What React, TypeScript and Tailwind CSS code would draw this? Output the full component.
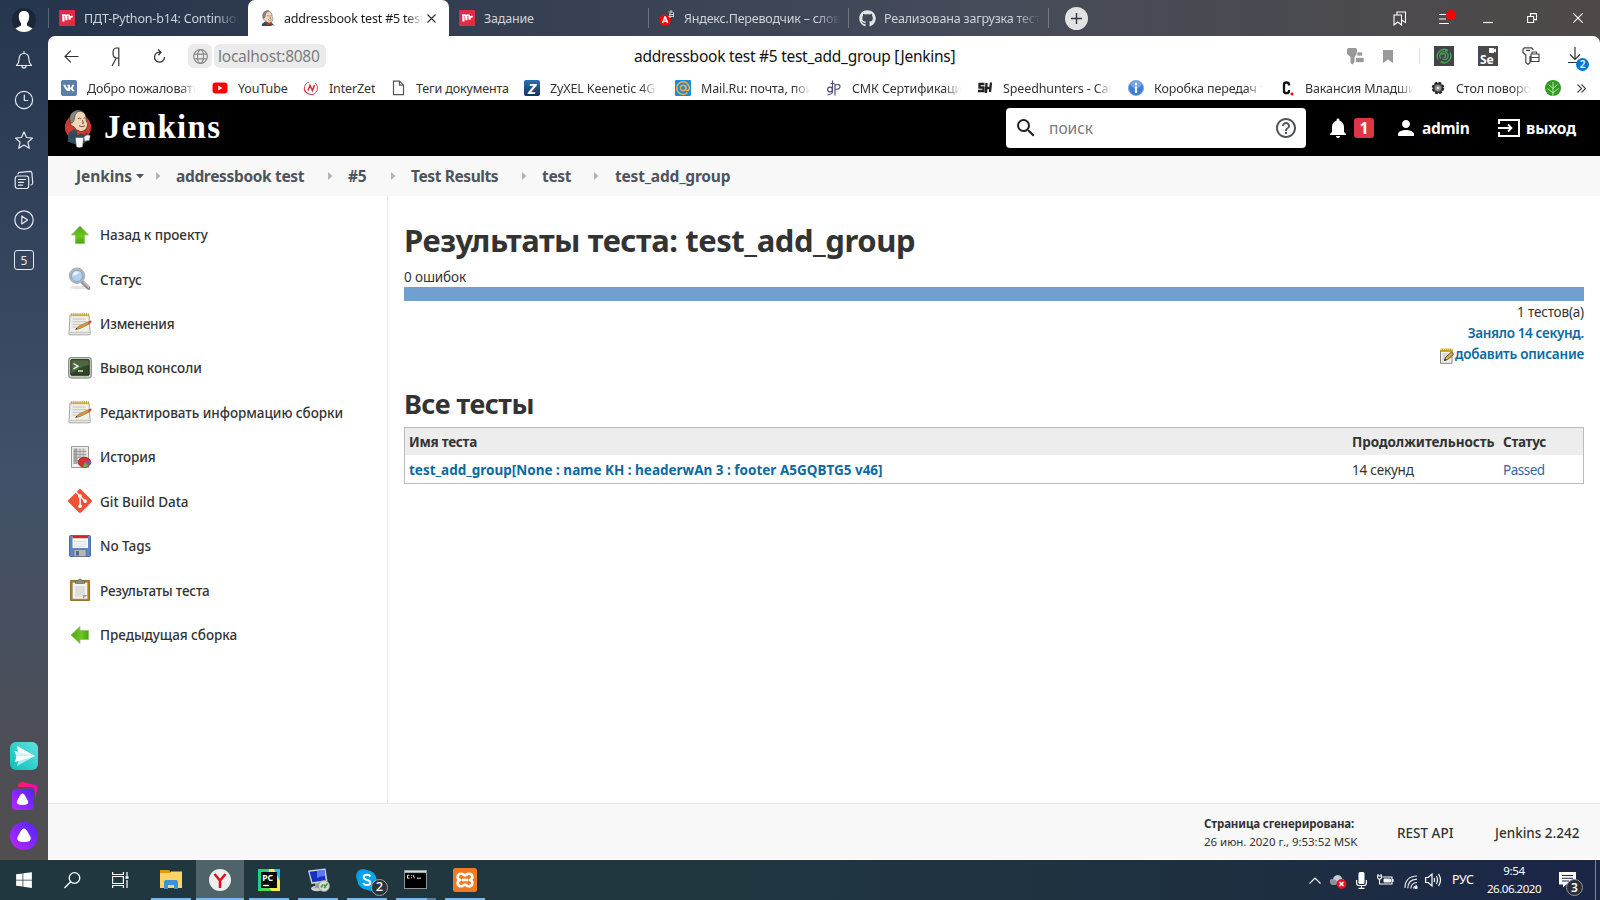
import type { ReactNode } from "react";
import { FaGithub, FaVk, FaWindows } from "react-icons/fa";
import { MdNotifications, MdPerson, MdSearch, MdHelpOutline } from "react-icons/md";

/* ---------- browser chrome icons ---------- */

function MIcon() {
  return (
    <svg width="16" height="16" viewBox="0 0 16 16" className="shrink-0">
      <rect width="16" height="16" rx="1" fill="#e42b45" />
      <path d="M3 5.200h2.500q1.700 0 1.700 1.700v1M7.200 8V7q0-1.800 1.700-1.800T10.600 7v.5M10.600 6.500q1 1 3-.3" fill="none" stroke="#fff" strokeWidth="1.800" />
      <path d="M4.400 5v6.500M7.400 6.500v3.700M10.600 6.500v3.200" stroke="#fff" strokeWidth="2.200" />
    </svg>
  );
}

function Butler({ className, viewBox, logo }: { className: string; viewBox: string; logo?: boolean }) {
  return (
    <svg className={className} viewBox={viewBox}>
      {logo && <circle cx="14" cy="18.500" r="13.200" fill="#d33833" />}
      <path d="M3.500 33l1-9 5.500-4 8 1 6.500 4-.5 7-4 3-8 1z" fill="#335061" />
      <path d="M5 27q3-4 7-3l3 3 4-3 4 4-3 6-9-1z" fill="#2b4a5c" />
      <path d="M7 8q1-6 8-6 6 0 7 6l.5 5q2 1 1 4-1 5-6.500 6-5-.5-7-5-4-1-4-4z" fill="#f0d6b7" stroke="#3a2f28" strokeWidth=".7" />
      <path d="M6.500 14Q4 6 9 3q4-3 8-1.500-5 1-6 5l-1 5-2 3z" fill="#8d8680" stroke="#3a3a3a" strokeWidth=".6" />
      <path d="M14 10q1.500-1.500 3 0M19.500 9.500q1-1 2 0M15 17q3 2 6 0M18.500 11l1 3.500h-1.500" fill="none" stroke="#5a4032" strokeWidth=".9" />
      <path d="M12.500 21l4.500 2 5-1.500v5l-4.500-1.500-4.500 2z" fill="#d33833" stroke="#7d1a17" strokeWidth=".4" />
      <path d="M11.500 29h8l-1 9.500q-3 1-6 0z" fill="#fff" stroke="#777" strokeWidth=".4" />
      <path d="M20 28q4-3 6.500-1l-1 5-5 .5z" fill="#f3f3f3" stroke="#555" strokeWidth=".5" />
    </svg>
  );
}

function Avatar() {
  return (
    <svg width="24" height="24" viewBox="0 0 24 24">
      <circle cx="12" cy="12" r="12" fill="#1c2636" />
      <path d="M12 3c3.800 0 5.400 2.600 5.200 6-.2 2.800-1 4.700-2.200 6v2.500c1.500 1.300 4 1.800 5.500 2.900A12 12 0 0 1 12 24a12 12 0 0 1-8.500-3.600C5 19.300 7.500 18.800 9 17.500V15c-1.200-1.300-2-3.200-2.200-6C6.600 5.600 8.200 3 12 3z" fill="#fff" />
    </svg>
  );
}

function RailIcon({ children }: { children: ReactNode }) {
  return (
    <svg width="20" height="20" viewBox="0 0 20 20" fill="none" stroke="#e6eaf0" strokeWidth="1.200" strokeLinejoin="round" strokeLinecap="round">
      {children}
    </svg>
  );
}

function Rail() {
  return (
    <aside className="flex w-12 shrink-0 flex-col items-center bg-linear-to-b from-[#26364f] from-0% via-[#41516a] via-55% to-[#504e4f] to-98% pt-2">
      <Avatar />
      <div className="mt-[18px] flex flex-col gap-5">
        <RailIcon>
          <path d="M2.500 15.500h15c-2-1.800-2.500-3.500-2.600-6.500C14.800 5.600 13 3.500 10 3.500S5.200 5.600 5.100 9c-.1 3-.6 4.700-2.600 6.500zM10 3.500V1.300M8 15.800c0 3 4 3 4 0" />
        </RailIcon>
        <RailIcon>
          <circle cx="10" cy="10" r="8.600" />
          <path d="M10.300 5v5.500h3.400" />
        </RailIcon>
        <RailIcon>
          <path d="M10 1.800l2.500 5.700 6 .6-4.600 4.100 1.400 6.100-5.300-3.200-5.300 3.200 1.400-6.100L1.500 8.100l6-.6z" />
        </RailIcon>
        <RailIcon>
          <rect x="1.200" y="6" width="13.500" height="12.500" rx="2.500" />
          <path d="M4 3.800q.3-1.400 1.800-1.500l10.200-.9q1.700 0 1.900 1.600l.8 10q0 1.500-1.700 2M4.500 9.500h7M4.500 12.300h5M4.500 15.100h4" />
        </RailIcon>
        <RailIcon>
          <circle cx="10" cy="10" r="9.200" />
          <path d="M7.800 6v8l5.800-4z" />
        </RailIcon>
        <div className="flex h-5 w-5 items-center justify-center rounded-[3px] border border-[#e6eaf0] pt-px text-xs text-[#e6eaf0]">5</div>
      </div>
      <div className="mt-auto flex flex-col gap-3 pb-[10px]">
        <svg width="28" height="28" viewBox="0 0 28 28">
          <defs>
            <linearGradient id="tq" x1="1" y1="0" x2="0" y2="1">
              <stop offset="0" stopColor="#5fe3e0" />
              <stop offset="1" stopColor="#0fbcbb" />
            </linearGradient>
          </defs>
          <rect width="28" height="28" rx="6" fill="url(#tq)" />
          <path d="M7 4l18 10L7 24l2-7z" fill="#a8efee" />
          <path d="M7 4l18 10-16-2.500zM4.500 9L25 14 5 20l1.500-6z" fill="#fff" />
          <path d="M4.500 9L25 14H6.500z" fill="#c8f6f6" />
        </svg>
        <svg width="28" height="28" viewBox="0 0 28 28">
          <defs>
            <linearGradient id="pk" x1="0" y1="0" x2="1" y2="0">
              <stop offset="0" stopColor="#ff1f5a" />
              <stop offset="1" stopColor="#ff00c8" />
            </linearGradient>
            <linearGradient id="al" x1="1" y1="0" x2="0" y2="1">
              <stop offset="0" stopColor="#4a26ff" />
              <stop offset="1" stopColor="#c026ff" />
            </linearGradient>
          </defs>
          <path d="M8 5q0-5 5-5l12 3q3 1 2.500 4l-2 9-1-8q-.5-3-3-3z" fill="url(#pk)" />
          <rect x="2" y="7" width="21.500" height="21" rx="4" fill="url(#al)" />
          <path d="M12.500 11.500q1.500 0 2.500 2l3 5.500q1.500 4-5.500 4t-5.500-4l3-5.500q1-2 2.500-2z" fill="#fff" />
        </svg>
        <svg width="28" height="28" viewBox="0 0 28 28">
          <circle cx="14" cy="14" r="14" fill="url(#al)" />
          <path d="M14 6.500q1.700 0 3 2.300l3.500 6.200q2 5-6.500 5t-6.500-5L11 8.800q1.300-2.300 3-2.300z" fill="#fff" />
        </svg>
      </div>
    </aside>
  );
}

function TabText({ className, children }: { className: string; children: ReactNode }) {
  return <span className={`overflow-hidden whitespace-nowrap pt-0.5 text-[12.500px] tracking-[-0.190px] ${className}`}>{children}</span>;
}

function TabStrip() {
  return (
    <div className="flex h-9 items-center">
      <div className="h-5 w-px bg-white/25" />
      <div className="flex w-[199px] items-center pl-[10px]">
        <MIcon />
        <TabText className="ml-[9px] w-[155px] mask-r-from-85% text-[#ced3da]">ПДТ-Python-b14: Continuous</TabText>
      </div>
      <div className="relative flex h-full w-[201px] items-center rounded-t-[7px] bg-white pl-3">
        <Butler className="h-4 w-4 shrink-0" viewBox="2 0 26 28" />
        <TabText className="ml-2 w-[139px] mask-r-from-88% text-[#1a1a1a]">addressbook test #5 test_add</TabText>
        <svg width="9" height="9" viewBox="0 0 9 9" className="ml-1 shrink-0" stroke="#333" strokeWidth="1.100">
          <path d="M.5.5l8 8M8.500.5l-8 8" />
        </svg>
      </div>
      <div className="flex w-[199px] items-center pl-[10px]">
        <MIcon />
        <TabText className="ml-[9px] text-[#ced3da]">Задание</TabText>
      </div>
      <div className="h-5 w-px bg-white/25" />
      <div className="flex w-[199px] items-center pl-[10px]">
        <svg width="16" height="16" viewBox="0 0 16 16" className="shrink-0">
          <circle cx="6" cy="10.200" r="5.800" fill="#f00" />
          <path d="M3.500 13l2.400-6h.4l2.400 6M4.300 11.200h3.600" fill="none" stroke="#fff" strokeWidth="1.500" />
          <path d="M9.500 2h5M12 0v3M10 4.500h5M11 3v5M14.500 2.500v4.500M9.500 6.500h5" stroke="#d8d8d8" strokeWidth=".9" />
        </svg>
        <TabText className="ml-[9px] w-[156px] mask-r-from-85% text-[#ced3da]">Яндекс.Переводчик – слово</TabText>
      </div>
      <div className="h-5 w-px bg-white/25" />
      <div className="flex w-[199px] items-center pl-[10px]">
        <FaGithub className="h-[17px] w-[17px] shrink-0 text-[#e2e4e6]" />
        <TabText className="ml-[8px] w-[156px] mask-r-from-85% text-[#ced3da]">Реализована загрузка тестов</TabText>
      </div>
      <div className="h-5 w-px bg-white/25" />
      <svg width="23" height="23" viewBox="0 0 23 23" className="ml-[16px]">
        <circle cx="11.500" cy="11.500" r="11.500" fill="#e1e2e4" />
        <path d="M11.500 6v11M6 11.500h11" stroke="#34373c" strokeWidth="1.400" />
      </svg>
      <div className="ml-auto flex items-center pr-[17px] text-white">
        <svg width="14" height="15" viewBox="0 0 14 15" fill="none" stroke="#fff" strokeWidth="1.100">
          <path d="M1 4h7.500v10l-3.700-3L1 14zM4 4V1h8.500v10.500L8.500 9" />
        </svg>
        <svg width="20" height="16" viewBox="0 0 20 16" className="ml-[32px]">
          <path d="M0 4.500h9M0 9h7M0 13.500h10" stroke="#fff" strokeWidth="1.200" />
          <circle cx="12" cy="5" r="5" fill="#f00" />
        </svg>
        <svg width="10" height="12" viewBox="0 0 10 12" className="ml-[24px]">
          <path d="M0 10.500h10" stroke="#fff" strokeWidth="1.200" />
        </svg>
        <svg width="10" height="10" viewBox="0 0 10 10" className="ml-[34px]" fill="none" stroke="#fff" strokeWidth="1.100">
          <path d="M.6 3.500h6v6h-6zM3.500 3.500V.6h6v6h-3" />
        </svg>
        <svg width="10" height="10" viewBox="0 0 10 10" className="ml-[36px]" stroke="#fff" strokeWidth="1.100">
          <path d="M0 0l10 10M10 0L0 10" />
        </svg>
      </div>
    </div>
  );
}

function AddressBar() {
  return (
    <div className="flex h-10 items-center pl-4 pr-[17px]">
      <svg width="15" height="13" viewBox="0 0 15 13" fill="none" stroke="#333" strokeWidth="1.200">
        <path d="M14.500 6.500H1M6.800.6L1 6.500l5.800 5.900" />
      </svg>
      <svg width="9" height="19" viewBox="0 0 9 19" className="ml-[32px]" fill="none" stroke="#333" strokeWidth="1.200">
        <path d="M7.800 19V1H5.500Q2 1 2 6t3.500 5h2.300M5.300 11L1 19" />
      </svg>
      <svg width="13" height="15" viewBox="0 0 13 15" className="ml-[33px]" fill="none" stroke="#333" strokeWidth="1.300">
        <path d="M7.500 3.200A5 5 0 1 0 11.500 8M5 .6l3 2.600-2.600 3" />
      </svg>
      <div className="ml-[22px] flex h-6 w-6 items-center justify-center rounded-[6px] bg-[#ebebeb]">
        <svg width="15" height="15" viewBox="0 0 15 15" fill="none" stroke="#888" strokeWidth="1.200">
          <circle cx="7.500" cy="7.500" r="6.800" />
          <ellipse cx="7.500" cy="7.500" rx="3" ry="6.800" />
          <path d="M1 5.200h13M1 9.800h13" />
        </svg>
      </div>
      <div className="ml-[2px] flex h-6 w-28 items-center rounded-[6px] bg-[#ebebeb] pl-1 pt-0.5 text-[15.500px] tracking-[-0.250px] text-[#7c7c7c]">localhost:8080</div>
      <div className="ml-[308px] whitespace-nowrap pt-0.5 text-[15.500px] tracking-[-0.260px] text-[#111]">addressbook test #5 test_add_group [Jenkins]</div>
      <div className="ml-auto flex items-center">
        <svg width="17" height="17" viewBox="0 0 17 17" className="text-[#999]" fill="currentColor">
          <path d="M0 1.500Q0 0 1.500 0h7Q10 0 10 1.500V6L7.500 9v5L5.500 16.500 3.500 15V9L0 6z" />
          <path d="M10 4h5.500v4H10zM8.500 9.500H17v5H8.500z" stroke="#fff" strokeWidth=".7" />
        </svg>
        <svg width="10" height="13" viewBox="0 0 10 13" className="ml-[19px]">
          <path d="M0 0h10v13L5 9.500 0 13z" fill="#999" />
        </svg>
        <div className="ml-[26px] h-4 w-px bg-[#ddd]" />
        <svg width="20" height="20" viewBox="0 0 20 20" className="ml-[14px]">
          <rect width="20" height="20" fill="#414348" />
          <path d="M4 13.500a7 7 0 0 1 10-9M16 6.500a7 7 0 0 1-9.500 9.500M14 4.500h-3M6.500 16h3M7 12.500a4 4 0 1 1 6 0q-2 2-4.500.5M7.500 8.500q3-2 4 .5t-2 2.500" fill="none" stroke="#45a35a" strokeWidth="1.300" />
        </svg>
        <div className="ml-6 flex h-5 w-5 flex-col justify-between overflow-hidden bg-[#4a4a4c] text-white">
          <svg width="7" height="5" viewBox="0 0 7 5" className="ml-[11px] mt-[2px] shrink-0 self-start">
            <path d="M0 0h5v1.500L7 .5v4L5 3.500V5H0z" fill="#fff" />
          </svg>
          <span className="ml-[2px] text-[12px] font-bold leading-[12px]">Se</span>
        </div>
        <svg width="18" height="18" viewBox="0 0 18 18" className="ml-[24px]" fill="none" stroke="#444" strokeWidth="1.200" strokeLinejoin="round">
          <path d="M8 9v6.800L6 17.400 3.800 15.500V8L1 5.500V2.200L2.500.8h7L11 2.200V3M4 3.300h4M9 7h8v7.500H9zM9 10.500h8M10 7V5h4.500v2" />
        </svg>
        <div className="relative ml-[28px] h-[18px] w-[15px]">
          <svg width="14" height="17" viewBox="0 0 14 17" fill="none" stroke="#333" strokeWidth="1.200">
            <path d="M7 0v12M2 7.500l5 5 5-5M0 15.500h9" />
          </svg>
          <div className="absolute -bottom-[6px] -right-[6px] flex h-[13px] w-[13px] items-center justify-center rounded-full bg-[#0078d7] text-[10px] font-semibold text-white">2</div>
        </div>
      </div>
    </div>
  );
}

function BookIcon({ kind }: { kind: string }) {
  switch (kind) {
    case "vk":
      return (
        <span className="flex h-4 w-4 items-center justify-center rounded-[2px] bg-[#5b7fa6]">
          <FaVk className="h-3 w-3 text-white" />
        </span>
      );
    case "yt":
      return (
        <svg width="16" height="16" viewBox="0 0 16 16">
          <rect x=".5" y="2.500" width="15" height="11" rx="3" fill="#f00" />
          <path d="M6.300 5.500v5l4.200-2.500z" fill="#fff" />
        </svg>
      );
    case "iz":
      return (
        <svg width="16" height="16" viewBox="0 0 16 16" fill="none" stroke="#cf3340">
          <path d="M6 2A6.500 6.500 0 0 0 3 12.500M8 14.700A6.800 6.800 0 0 0 12.500 3" strokeWidth=".9" />
          <path d="M1 9.500q3 5 7.500 5" strokeWidth="1.200" />
          <path d="M5 10.500l2-5 2.500 5 2-5.500" strokeWidth="1.600" />
        </svg>
      );
    case "doc":
      return (
        <svg width="16" height="16" viewBox="0 0 16 16" fill="none" stroke="#555" strokeWidth="1.200">
          <path d="M3.500 1.200h6l4 4v9.500h-10zM9.500 1.200v4h4" />
        </svg>
      );
    case "zy":
      return <span className="flex h-4 w-4 items-center justify-center rounded-[2px] bg-linear-to-b from-[#2c6fb8] to-[#12335f] text-[15px] font-bold italic leading-none text-white">Z</span>;
    case "mail":
      return (
        <svg width="16" height="16" viewBox="0 0 16 16">
          <rect width="16" height="16" rx="1" fill="#168de2" />
          <path d="M12.500 12.500a6.300 6.300 0 1 1 1.800-4.500c0 3.200-3.600 3.200-3.600.4V5.500" fill="none" stroke="#ffa930" strokeWidth="1.500" />
          <circle cx="8" cy="8" r="2.700" fill="none" stroke="#ffa930" strokeWidth="1.500" />
        </svg>
      );
    case "smk":
      return (
        <svg width="16" height="16" viewBox="0 0 16 16" fill="none" stroke="#4c4f78" strokeWidth="1.200">
          <circle cx="4" cy="9.500" r="2.400" />
          <path d="M6.500 .5v12M9 4v11.500M1.500 15q3.500-.5 5-2.500M4.500 3.500h4" />
          <path d="M9 5q5-1.500 5 1.500T9 9.500" />
        </svg>
      );
    case "sh":
      return (
        <svg width="16" height="16" viewBox="0 0 16 16" fill="none" stroke="#222" strokeWidth="2.300">
          <path d="M7.500 4H2.500v3.500h4V11H1M9.500 3L9 13M14 2.500L13 12M8 8h6" />
        </svg>
      );
    case "info":
      return (
        <svg width="16" height="16" viewBox="0 0 16 16">
          <circle cx="8" cy="8" r="7.600" fill="#3f7fcf" stroke="#7ea6d8" strokeWidth=".8" />
          <ellipse cx="8" cy="4.600" rx="5.500" ry="3.500" fill="#8db8ea" opacity=".7" />
          <path d="M8 2.800v2.400M8 6.500V13" stroke="#fff" strokeWidth="2.200" />
        </svg>
      );
    case "c":
      return (
        <svg width="16" height="16" viewBox="0 0 16 16">
          <path d="M10 5.500V4.500Q10 2.500 7.500 2.500T5 4.500v6.500q0 2.200 2.500 2.200t2.500-2.200V10" fill="none" stroke="#111" strokeWidth="2.300" />
          <circle cx="13" cy="14" r="1.400" fill="#f00" />
        </svg>
      );
    case "gear":
      return (
        <svg width="16" height="16" viewBox="0 0 16 16">
          <circle cx="8" cy="8" r="5.200" fill="#444" />
          <circle cx="8" cy="8" r="5.300" fill="none" stroke="#1c1c1c" strokeWidth="1.800" strokeDasharray="2.760 1.400" />
          <circle cx="8" cy="8" r="3.300" fill="#8c8c8c" />
          <circle cx="8" cy="8" r="1.200" fill="#eee" />
        </svg>
      );
    default:
      return (
        <svg width="16" height="16" viewBox="0 0 16 16">
          <circle cx="8" cy="8" r="8" fill="#2f9a1f" />
          <path d="M8 16V2M8 13l5.500-4.500M8 13L2.500 8.500M8 8.500l4.500-4M8 8.500l-4.500-4" stroke="#c9efb4" strokeWidth=".9" />
        </svg>
      );
  }
}

const bookmarks = [
  { icon: "vk", label: "Добро пожаловать", cell: "w-[151px]", text: "ml-[10px] w-[109px] mask-r-from-85%" },
  { icon: "yt", label: "YouTube", cell: "w-[91px]", text: "ml-[10px]" },
  { icon: "iz", label: "InterZet", cell: "w-[87px]", text: "ml-[10px]" },
  { icon: "doc", label: "Теги документа", cell: "w-[134px]", text: "ml-[10px]" },
  { icon: "zy", label: "ZyXEL Keenetic 4G", cell: "w-[151px]", text: "ml-[10px] w-[107px] mask-r-from-85%" },
  { icon: "mail", label: "Mail.Ru: почта, поиск", cell: "w-[151px]", text: "ml-[10px] w-[109px] mask-r-from-85%" },
  { icon: "smk", label: "СМК Сертификация", cell: "w-[151px]", text: "ml-[10px] w-[109px] mask-r-from-85%" },
  { icon: "sh", label: "Speedhunters - Car", cell: "w-[151px]", text: "ml-[10px] w-[109px] mask-r-from-85%" },
  { icon: "info", label: "Коробка передач т", cell: "w-[151px]", text: "ml-[10px] w-[109px] mask-r-from-85%" },
  { icon: "c", label: "Вакансия Младший", cell: "w-[151px]", text: "ml-[10px] w-[109px] mask-r-from-85%" },
  { icon: "gear", label: "Стол поворотный", cell: "w-[115px]", text: "ml-[10px] w-[75px] mask-r-from-75%" },
];

function Bookmarks() {
  return (
    <div className="flex h-6 items-center pl-[13px] text-[12.500px] tracking-[-0.130px] text-[#333]">
      {bookmarks.map((b) => (
        <div key={b.icon} className={`flex shrink-0 items-center ${b.cell}`}>
          <span className="shrink-0">
            <BookIcon kind={b.icon} />
          </span>
          <span className={`overflow-hidden whitespace-nowrap pt-px leading-[23px] ${b.text}`}>{b.label}</span>
        </div>
      ))}
      <BookIcon kind="leaf" />
      <svg width="9" height="9" viewBox="0 0 9 9" className="ml-4" fill="none" stroke="#444" strokeWidth="1.100">
        <path d="M.5.5l4 4-4 4M4.500.5l4 4-4 4" />
      </svg>
    </div>
  );
}

/* ---------- Jenkins page ---------- */

function JenkinsHeader() {
  return (
    <header className="flex h-14 items-center bg-black pl-4 text-base font-bold text-white">
      <Butler className="h-[39px] w-7" viewBox="0 0 28 39.500" logo />
      <span className="ml-[12px] w-[120px] pb-0.5 font-['Liberation_Serif',serif] text-[33px] leading-none tracking-[1.300px]">Jenkins</span>
      <div className="ml-auto flex h-10 w-[300px] items-center rounded bg-white pl-2 pr-2">
        <MdSearch className="h-6 w-6 text-[#222]" />
        <span className="ml-[11px] pt-0.5 text-[15.500px] font-normal text-[#7a7a7a]">поиск</span>
        <MdHelpOutline className="ml-auto h-6 w-6 text-[#4d545d]" />
      </div>
      <MdNotifications className="ml-[20px] h-6 w-6" />
      <span className="ml-1 flex h-5 w-5 items-center justify-center rounded-[3px] bg-[#dc3545]">1</span>
      <MdPerson className="ml-[20px] h-6 w-6" />
      <span className="ml-1 w-12 pt-0.5 text-[15.500px] tracking-[-0.290px]">admin</span>
      <svg width="22" height="18" viewBox="0 0 22 18" className="ml-[28px]" fill="none" stroke="#fff" strokeWidth="2">
        <path d="M1 5V1h20v16H1v-4" />
        <path d="M0 9h13M10 5.500L13.500 9 10 12.500" strokeWidth="1.800" />
      </svg>
      <span className="ml-[6px] w-[74px] pt-0.5 text-[15.500px] tracking-[-0.100px]">выход</span>
    </header>
  );
}

function Sep({ className }: { className: string }) {
  return (
    <svg width="5" height="8" viewBox="0 0 5 8" className={className}>
      <path d="M0 0l4.500 4L0 8z" fill="#b5b5b5" />
    </svg>
  );
}

function Breadcrumbs() {
  return (
    <nav className="flex h-10 items-center bg-[#f8f8f8] pl-7 text-[15.500px] font-bold text-[#4d545d]">
      <span className="w-[57px] pt-0.5 tracking-[-0.080px]">Jenkins</span>
      <svg width="8" height="5" viewBox="0 0 8 5" className="ml-[3px]">
        <path d="M0 0h8L4 4.500z" fill="#4d545d" />
      </svg>
      <Sep className="ml-[12px]" />
      <span className="ml-[15px] w-[129px] whitespace-nowrap pt-0.5 tracking-[-0.340px]">addressbook test</span>
      <Sep className="ml-[23px]" />
      <span className="ml-[15px] w-[19px] pt-0.5 tracking-[-0.300px]">#5</span>
      <Sep className="ml-[24px]" />
      <span className="ml-[15px] w-[88px] whitespace-nowrap pt-0.5 tracking-[-0.400px]">Test Results</span>
      <Sep className="ml-[23px]" />
      <span className="ml-[15px] w-[29px] pt-0.5 tracking-[-0.350px]">test</span>
      <Sep className="ml-[23px]" />
      <span className="ml-[16px] pt-0.5 tracking-[-0.200px]">test_add_group</span>
    </nav>
  );
}

function Notepad({ className }: { className: string }) {
  return (
    <svg className={className} viewBox="0 0 24 24">
      <path d="M2 3h19l1.200 19q0 .8-1 .8H1.800q-1 0-.8-.9z" fill="#efefec" stroke="#a5a5a0" strokeWidth="1" />
      <path d="M1.400 20.500h20.700" stroke="#c8c8c4" strokeWidth="1.500" />
      <path d="M3 2.800h18" stroke="#c9a92c" strokeWidth="3" strokeDasharray="1.400 .7" />
      <path d="M4.500 7h13M4.500 9.700h14M4.500 12.400h9M4.500 15h6" stroke="#c2c2bf" strokeWidth="1" />
      <path d="M8 17.500l3-3.500 9.500-4.300 1 2.200L12 16.500z" fill="#dc9b3c" stroke="#8a5a14" strokeWidth=".6" />
      <path d="M20 9.900l2.500-1.400q1.500 0 1 1.700L21.200 12z" fill="#e04a32" />
      <path d="M7 18l2.400-1.500-.9-.8z" fill="#333" />
    </svg>
  );
}

function SmallNotepad() {
  return (
    <svg width="16" height="16" viewBox="0 0 16 16" className="mt-1">
      <path d="M1.500 2.500h11.500v12.800H1.500z" fill="#f0f0ee" stroke="#85857f" />
      <path d="M1.500 2.300h12" stroke="#c79f1c" strokeWidth="3.200" />
      <path d="M2 1.200h11.500" stroke="#f0d45c" strokeWidth="1.400" strokeDasharray="1.200 .8" />
      <path d="M3.500 6h6M3.500 8h5M3.500 10h3M3.500 12h3" stroke="#b8b8b4" strokeWidth=".9" />
      <path d="M5.500 12.500l1-3 6-5.500 2.200 2.200-6 5.300z" fill="#d8b24c" stroke="#4d3a10" strokeWidth=".9" />
      <path d="M5.300 12.800l2-.8-1.400-1.300z" fill="#222" />
    </svg>
  );
}

function GreenArrow({ className }: { className: string }) {
  return (
    <svg width="24" height="24" viewBox="0 0 24 24" className={className}>
      <defs>
        <linearGradient id="ga" x1="0" y1="0" x2="0" y2="1">
          <stop offset="0" stopColor="#4fa51b" />
          <stop offset=".6" stopColor="#6cc81f" />
          <stop offset="1" stopColor="#48a30c" />
        </linearGradient>
      </defs>
      <path d="M12 3l8.500 9h-4v8.500h-9V12h-4z" fill="url(#ga)" stroke="#8fbf6f" strokeWidth=".8" />
    </svg>
  );
}

function TaskIcon({ kind }: { kind: string }) {
  switch (kind) {
    case "up":
      return <GreenArrow className="" />;
    case "prev":
      return <GreenArrow className="-rotate-90" />;
    case "search":
      return (
        <svg width="24" height="24" viewBox="0 0 24 24">
          <ellipse cx="11" cy="20.500" rx="9" ry="1.800" fill="#e4e4e4" />
          <path d="M14.500 15l6 6" stroke="#8b8b8b" strokeWidth="3.800" strokeLinecap="round" />
          <path d="M15 14.500l6 6" stroke="#c9c9c9" strokeWidth="1.300" />
          <circle cx="9" cy="8.800" r="7.200" fill="#c6dcf4" stroke="#b2b2b2" strokeWidth="2" />
          <circle cx="9" cy="8.800" r="5.700" fill="#b4d0f0" stroke="#6c93c8" strokeWidth=".8" />
          <path d="M4.500 8.500a4.500 4.500 0 0 1 7-3.500q-2 3.500-7 3.500z" fill="#e6f1fc" />
        </svg>
      );
    case "term":
      return (
        <svg width="24" height="24" viewBox="0 0 24 24">
          <rect x=".6" y="1.600" width="22.800" height="20.500" rx="2.500" fill="#c8c9c5" stroke="#858782" />
          <rect x="2.800" y="3.700" width="18.400" height="15.500" rx=".8" fill="#2e4724" stroke="#222a1d" />
          <path d="M3.300 4.200h17.400v5Q14 10 9 14l-5.700 3z" fill="#4c693f" />
          <path d="M5.500 7.500l4.500 2.700-4.500 2.700" fill="none" stroke="#eef3ea" strokeWidth="1.400" />
          <path d="M10 15h5" stroke="#eef3ea" strokeWidth="1.400" />
          <circle cx="17" cy="20.700" r=".6" fill="#7bc943" />
        </svg>
      );
    case "hist":
      return (
        <svg width="24" height="24" viewBox="0 0 24 24">
          <path d="M3.500 1.500h17v21h-17z" fill="#f1f1f0" stroke="#9a9a98" />
          <path d="M5.500 3.500h13V19h-13z" fill="#d5d5d3" />
          <path d="M5.500 3.500h3.300V19H5.500z" fill="#a9a9a7" />
          <path d="M5.500 6.500h13M5.500 9.500h13M5.500 12.500h13M5.500 15.500h13M8.800 3.500V19M12 3.500V19M15.300 3.500V19" stroke="#8f8f8d" strokeWidth=".7" />
          <ellipse cx="16.500" cy="17.300" rx="6.300" ry="5" fill="#dc2f33" stroke="#96191c" strokeWidth=".7" />
          <path d="M16.800 17l5.800-1.300q.5 3.300-2.300 5z" fill="#4b72b5" />
          <path d="M16.800 17l3.500 3.900q-2.600 1.600-5.200.9z" fill="#6ab92f" />
        </svg>
      );
    case "git":
      return (
        <svg width="24" height="24" viewBox="0 0 24 24">
          <path d="M23.546 10.930L13.067.452c-.604-.603-1.582-.603-2.188 0L8.708 2.627l2.760 2.760c.645-.215 1.379-.070 1.889.441.516.515.658 1.258.438 1.900l2.658 2.660c.645-.223 1.387-.078 1.900.435.721.720.721 1.884 0 2.604-.719.719-1.881.719-2.600 0-.539-.541-.674-1.337-.404-1.996L12.860 8.955v6.525c.176.086.342.203.488.348.713.721.713 1.883 0 2.600-.719.721-1.889.721-2.609 0-.719-.719-.719-1.879 0-2.598.182-.180.387-.316.605-.406V8.835c-.217-.091-.424-.222-.600-.401-.545-.545-.676-1.342-.396-2.009L7.636 3.700.450 10.881c-.600.605-.600 1.584 0 2.189l10.480 10.477c.604.604 1.582.604 2.186 0l10.430-10.430c.605-.603.605-1.582 0-2.187" fill="#f05033" />
        </svg>
      );
    case "floppy":
      return (
        <svg width="24" height="24" viewBox="0 0 24 24">
          <path d="M2.500 1.500h19q1 0 1 1v19q0 1-1 1h-19q-1 0-1-1v-19q0-1 1-1z" fill="#5c88c6" stroke="#4a6ca4" />
          <path d="M4.500 2h15.500v12h-15.500z" fill="#f8f8f8" />
          <path d="M4.500 2h15.500v2.200h-15.500z" fill="#d3291c" />
          <path d="M6 7.500h12.500M6 10h12.500M6 12.300h12.500" stroke="#d4d4d4" strokeWidth=".8" />
          <path d="M6 15.500h12v7H6z" fill="#b5b8ba" stroke="#6a6e70" strokeWidth=".7" />
          <path d="M8 17h3v4.500H8z" fill="#4d6796" />
        </svg>
      );
    case "clip":
      return (
        <svg width="24" height="24" viewBox="0 0 24 24">
          <path d="M2.500 2.500h19v20h-19z" fill="#b57b1e" stroke="#875a12" strokeWidth=".8" />
          <path d="M4.500 4.500h15v16.500h-15z" fill="#f3f3f1" stroke="#a09a8c" strokeWidth=".6" />
          <path d="M7 8h10v9l-3 2H7z" fill="#dededc" />
          <path d="M15 20.700V17h4.300z" fill="#9d9d9a" />
          <path d="M7.500 5.500V3h2.500q.2-2 2-2t2 2h2.500v2.500z" fill="#8e8e83" stroke="#66665c" strokeWidth=".7" />
        </svg>
      );
    default:
      return <Notepad className="h-6 w-6" />;
  }
}

const tasks = [
  { icon: "up", label: "Назад к проекту", tr: "tracking-[-0.040px]" },
  { icon: "search", label: "Статус", tr: "tracking-[-0.150px]" },
  { icon: "note", label: "Изменения", tr: "tracking-[-0.200px]" },
  { icon: "term", label: "Вывод консоли", tr: "tracking-[-0.040px]" },
  { icon: "note", label: "Редактировать информацию сборки", tr: "tracking-[-0.040px]" },
  { icon: "hist", label: "История", tr: "tracking-[-0.120px]" },
  { icon: "git", label: "Git Build Data", tr: "tracking-[-0.040px]" },
  { icon: "floppy", label: "No Tags", tr: "tracking-[-0.050px]" },
  { icon: "clip", label: "Результаты теста", tr: "tracking-[-0.200px]" },
  { icon: "prev", label: "Предыдущая сборка", tr: "tracking-[-0.040px]" },
];

function SidePanel() {
  return (
    <aside className="flex w-[340px] shrink-0 flex-col border-r border-[#e8ebeb] pl-5 pt-[16.500px]">
      {tasks.map((t) => (
        <div key={t.label} className="flex h-[44.450px] items-center gap-2">
          <TaskIcon kind={t.icon} />
          <span className={`pt-px text-[13.500px] font-medium text-[#333] ${t.tr}`}>{t.label}</span>
        </div>
      ))}
    </aside>
  );
}

function Results() {
  return (
    <main className="flex flex-1 flex-col pl-4 pr-4 text-[13.500px] text-[#333]">
      <h1 className="mt-[24px] whitespace-nowrap text-[31px] font-bold leading-10 tracking-[-0.450px]">Результаты теста: test_add_group</h1>
      <div className="mt-[7px] h-5 leading-5 tracking-[-0.120px]">0 ошибок</div>
      <div className="h-[14px] bg-[#729fcf]" />
      <div className="mt-px flex flex-col items-end leading-[21px]">
        <span className="tracking-[-0.170px]">1 тестов(а)</span>
        <a className="font-semibold tracking-[-0.350px] text-[#0b6aa2]">Заняло 14 секунд.</a>
        <a className="flex font-semibold tracking-[-0.230px] text-[#0b6aa2]">
          <SmallNotepad />
          добавить описание
        </a>
      </div>
      <h2 className="mt-[21px] text-[27px] font-bold leading-9 tracking-[-0.500px]">Все тесты</h2>
      <div className="mt-[5px] border border-[#bbb]">
        <div className="flex h-[27px] items-center bg-[#ededed] pl-1 pt-0.5 font-bold">
          <span className="w-[943px] tracking-[-0.240px]">Имя теста</span>
          <span className="w-[151px] tracking-[-0.050px]">Продолжительность</span>
          <span className="tracking-[-0.280px]">Статус</span>
        </div>
        <div className="mt-px flex h-[27px] items-center pl-1 pt-0.5">
          <a className="w-[943px] font-bold text-[#0b6aa2]">test_add_group[None : name KH : headerwAn 3 : footer A5GQBTG5 v46]</a>
          <span className="w-[151px] tracking-[-0.200px]">14 секунд</span>
          <span className="tracking-[-0.500px] text-[#3465a4]">Passed</span>
        </div>
      </div>
    </main>
  );
}

function Footer() {
  return (
    <footer className="flex h-[57px] items-center border-b border-t border-b-white border-t-[#e8ebeb] bg-[#f8f8f8] pl-[1156px] pt-[2px] text-[13.500px] font-medium text-[#333]">
      <div className="flex w-[193px] flex-col whitespace-nowrap text-[11.500px] leading-[18px]">
        <span className="font-bold tracking-[-0.130px]">Страница сгенерирована:</span>
        <span className="font-normal tracking-[-0.040px]">26 июн. 2020 г., 9:53:52 MSK</span>
      </div>
      <span className="w-[98px] pt-0.5">REST API</span>
      <span className="pt-0.5">Jenkins 2.242</span>
    </footer>
  );
}

/* ---------- Windows taskbar ---------- */

function TaskButton({ className, underline, children }: { className: string; underline: string; children: ReactNode }) {
  return (
    <div className={`flex h-10 flex-col items-center ${className}`}>
      <div className="flex flex-1 items-center pt-px">{children}</div>
      <div className={`h-[2px] ${underline}`} />
    </div>
  );
}

function Taskbar() {
  return (
    <footer className="flex h-10 shrink-0 items-center bg-linear-to-r from-[#203740] from-45% via-[#1e3040] via-75% to-[#1b2547] text-white">
      <FaWindows className="ml-[15px] h-[18px] w-[18px]" />
      <svg width="17" height="17" viewBox="0 0 17 17" className="ml-[31px]" fill="none" stroke="#fff" strokeWidth="1.300">
        <circle cx="10.500" cy="6" r="5.300" />
        <path d="M6.700 9.800L.5 16" />
      </svg>
      <svg width="17" height="16" viewBox="0 0 17 16" className="ml-[31px]" fill="none" stroke="#fff" strokeWidth="1.200">
        <path d="M.6 4.500h10.800v7H.6zM.6 0v2.500h10.800V0M.6 16v-2.500h10.800V16M15 0v4M15 8v8" />
        <path d="M13.500 5.500h3" strokeWidth="2.500" />
      </svg>
      <TaskButton className="ml-[22px] w-10" underline="w-10 bg-[#76b9ed]">
        <svg width="22" height="20" viewBox="0 0 22 20">
          <path d="M0 0h9l2 3H0z" fill="#e09a10" />
          <path d="M0 3h10l1-1.500h11V18H0z" fill="#ffd364" />
          <path d="M4 19v-7q0-2 2-2h10q2 0 2 2v7h-4v-4H8v4z" fill="#3b92d9" />
        </svg>
      </TaskButton>
      <TaskButton className="ml-[5px] w-12 bg-[#4f636b]" underline="w-12 bg-[#76b9ed]">
        <svg width="22" height="22" viewBox="0 0 22 22">
          <circle cx="11" cy="11" r="11" fill="#eeeeee" />
          <path d="M5.500 5l5.500 6.500L16.500 5M11 11.500V19" fill="none" stroke="#e01018" strokeWidth="2.500" />
        </svg>
      </TaskButton>
      <TaskButton className="ml-[5px] w-10" underline="w-10 bg-[#76b9ed]">
        <svg width="22" height="22" viewBox="0 0 22 22">
          <path d="M0 0h22v22H0z" fill="#1fd08a" />
          <path d="M11 0h11v22H8z" fill="#f3ee4a" />
          <path d="M16 0h6v12z" fill="#19c1e8" />
          <path d="M0 22l8-6 6 6z" fill="#54d84c" />
          <path d="M3 3h16v16H3z" fill="#0a0a0a" />
          <path d="M5 16.500h6" stroke="#fff" strokeWidth="1.400" />
          <text x="4.300" y="11.500" fontSize="8.500" fontWeight="700" fill="#fff" fontFamily="Noto Sans, sans-serif">PC</text>
        </svg>
      </TaskButton>
      <TaskButton className="ml-[9px] w-10" underline="w-10 bg-[#76b9ed]">
        <svg width="23" height="24" viewBox="0 0 23 24">
          <ellipse cx="10" cy="20.500" rx="6" ry="2.800" fill="#c9ccd0" />
          <path d="M8 15h4v5H8z" fill="#9a9da2" />
          <path d="M1 2.500L18.500.5l2 13L4.500 16z" fill="#d6d8dc" />
          <path d="M2.500 3.800L17.300 2l1.500 10.300-13.300 2z" fill="#1730c4" />
          <path d="M10 3l7.300-1 1 6q-5 0-8.300 2z" fill="#5b7bf0" />
          <circle cx="17" cy="18" r="5.500" fill="#d5dcd6" stroke="#8a938c" strokeWidth=".7" />
          <path d="M14 19.500l2-3M17 20l3.500-4.500M17 16.500l2 3" stroke="#3a9a3a" strokeWidth="1.500" />
        </svg>
      </TaskButton>
      <TaskButton className="ml-[9px] w-10" underline="w-10 bg-[#76b9ed]">
        <div className="relative h-[22px] w-[22px]">
          <svg width="22" height="22" viewBox="0 0 22 22">
            <circle cx="7" cy="7" r="7" fill="#0f95e8" />
            <circle cx="15" cy="15" r="7" fill="#0aa0e8" />
            <circle cx="11" cy="11" r="9.700" fill="#08a5ec" />
            <path d="M14.500 7.500Q13.500 5.800 11 5.800q-3.300 0-3.300 2.500 0 2 3.300 2.600t3.300 2.700q0 2.500-3.300 2.500-2.800 0-3.800-2" fill="none" stroke="#fff" strokeWidth="2" />
          </svg>
          <div className="absolute left-[15px] top-[10px] flex h-[17px] w-[17px] items-center justify-center rounded-full border border-[#9aa3a8] bg-[#2b3438] text-[13px] font-medium">2</div>
        </div>
      </TaskButton>
      <TaskButton className="ml-[9px] w-10" underline="w-10 bg-linear-to-r from-[#76b9ed] from-78% to-[#4f7fa3] to-78%">
        <svg width="23" height="19" viewBox="0 0 23 19" className="mr-px">
          <path d="M0 0h23v19H0z" fill="#8f9496" />
          <path d="M1 3h21v15H1z" fill="#000" />
          <path d="M1 .8h21v1.500H1z" fill="#d7d9da" />
          <path d="M5.500 5.200H3.500v3h2M7.500 5.200v.8M7.500 7.400v.8M9 5l1.500 3.300M13 8.200h4" stroke="#e8e8e8" fill="none" />
        </svg>
      </TaskButton>
      <TaskButton className="ml-[9px] w-10" underline="w-10 bg-[#76b9ed]">
        <svg width="24" height="24" viewBox="0 0 24 24">
          <rect width="24" height="24" rx="2.500" fill="#f07a22" />
          <path d="M8.200 5.800c2.500 0 2.600 1.600 3.800 1.600s1.300-1.600 3.800-1.600c4.400 0 4.400 4.600 1.600 6.200 2.800 1.600 2.800 6.200-1.600 6.200-2.500 0-2.600-1.600-3.800-1.600s-1.300 1.600-3.800 1.600c-4.400 0-4.400-4.600-1.600-6.200-2.800-1.600-2.800-6.200 1.600-6.200z" fill="none" stroke="#fff" strokeWidth="2.600" />
          <path d="M9 12h6" stroke="#fff" strokeWidth="2.600" />
        </svg>
      </TaskButton>

      <div className="ml-auto flex h-10 items-center text-[12.500px]">
        <svg width="12" height="7" viewBox="0 0 12 7" fill="none" stroke="#fff" strokeWidth="1.200">
          <path d="M.5 6.500L6 1l5.500 5.500" />
        </svg>
        <svg width="17" height="14" viewBox="0 0 17 14" className="ml-[9px] mt-1">
          <path d="M3 9Q0 9 0 6.300T3 4q1-3.500 4.500-4Q11 .2 12 3.500q2.500.5 2.500 3T12 9z" fill="#c9cdd2" />
          <path d="M0 7q0-3 3-3 2.500 0 4 2.500T6 10H3Q0 10 0 7z" fill="#8b9199" />
          <circle cx="11.500" cy="9" r="5" fill="#e81123" />
          <path d="M9.500 7l4 4M13.500 7l-4 4" stroke="#fff" strokeWidth="1.500" />
        </svg>
        <svg width="11" height="17" viewBox="0 0 11 17" className="ml-[9px]">
          <rect x="2.500" y="0" width="6" height="12" rx="1.500" fill="#fff" />
          <path d="M.6 8v3q0 2.500 2.500 2.500h4.800q2.500 0 2.500-2.500V8M5.500 13.500v3M2.500 16.300h6" fill="none" stroke="#fff" strokeWidth="1.200" />
        </svg>
        <svg width="17" height="12" viewBox="0 0 17 12" className="ml-[10px]" fill="none" stroke="#fff">
          <path d="M5.500 3h9.500v7H5.500M16 5v3M1 0v2M4 0v2M.5 2h4v2l-2 1.500-2-1.500zM2.500 5.500V10h3" strokeWidth="1.100" />
          <path d="M7 5h6.500v3H7z" fill="#fff" />
        </svg>
        <svg width="14" height="14" viewBox="0 0 14 14" className="ml-[10px] mt-1" fill="none" stroke="#e5e7ea" strokeWidth="1.200">
          <path d="M1 13Q1 1.500 13 1M3.800 13.300Q4 4.500 13 4.200M6.800 13.500Q7 8 13 7.500M9.500 13.500Q9.800 11 13 10.500" />
          <circle cx="12" cy="12.500" r="1.100" fill="#fff" />
        </svg>
        <svg width="17" height="14" viewBox="0 0 17 14" className="ml-[7px]" fill="none" stroke="#fff" strokeWidth="1.200">
          <path d="M.6 4.500h2.500L7 1v12L3.100 9.500H.6zM9 5q1.200 2 0 4M11.300 3q2.500 4 0 8M13.500 1q4 6 0 12" />
        </svg>
        <span className="ml-[10px] w-[34px] tracking-[-0.200px]">РУС</span>
        <div className="flex w-[56px] flex-col items-center text-[11.500px] leading-[18px]">
          <span className="tracking-[-0.300px]">9:54</span>
          <span className="tracking-[-0.480px]">26.06.2020</span>
        </div>
        <div className="relative ml-[17px] mr-[19px] h-4 w-[17px]">
          <svg width="17" height="16" viewBox="0 0 17 16">
            <path d="M0 0h17v12.500H7L4 15.500v-3H0z" fill="#fff" />
            <path d="M3 3.500h11M3 6.200h11M3 9h7" stroke="#1b2547" strokeWidth="1.100" />
          </svg>
          <div className="absolute left-[7px] top-[7px] flex h-[17px] w-[17px] items-center justify-center rounded-full border border-[#8c93a0] bg-[#2a3038] text-[12px] font-semibold">3</div>
        </div>
        <div className="mr-1 h-10 w-px bg-[#7b8494]" />
      </div>
    </footer>
  );
}

export default function App() {
  return (
    <div className="flex h-[900px] w-[1600px] flex-col overflow-hidden bg-[#26364f] font-['Noto_Sans','Open_Sans',sans-serif] leading-normal">
      <div className="flex min-h-0 flex-1">
        <Rail />
        <div className="flex min-w-0 flex-1 flex-col bg-linear-to-r from-[#26344c] via-[#454b59] via-60% to-[#4e4947]">
          <TabStrip />
          <div className="flex min-h-0 flex-1 flex-col overflow-hidden rounded-t-[7px] bg-white">
            <AddressBar />
            <Bookmarks />
            <JenkinsHeader />
            <Breadcrumbs />
            <div className="flex min-h-0 flex-1">
              <SidePanel />
              <Results />
            </div>
            <Footer />
          </div>
        </div>
      </div>
      <Taskbar />
    </div>
  );
}
